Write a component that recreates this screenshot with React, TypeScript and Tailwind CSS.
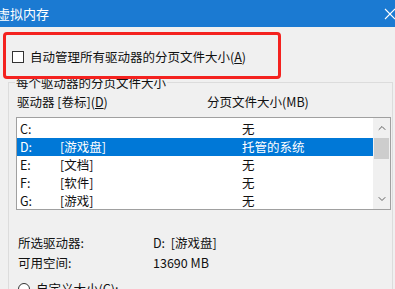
import { ChevronUp, ChevronDown } from 'lucide-react';

const drives = [
  { letter: 'C:', label: '', size: '无' },
  { letter: 'D:', label: '[游戏盘]', size: '托管的系统', selected: true },
  { letter: 'E:', label: '[文档]', size: '无' },
  { letter: 'F:', label: '[软件]', size: '无' },
  { letter: 'G:', label: '[游戏]', size: '无' },
];

export default function App() {
  return (
    <div className="relative w-[395px] h-[289px] overflow-hidden bg-[#f0f0f0] text-[12.5px] text-[#111] font-['Noto_Sans_CJK_SC',sans-serif]">
      {/* title bar */}
      <div className="h-[27px] bg-[#1b7ad2] flex items-center justify-between">
        <span className="ml-[-3px] text-white text-[13px] leading-[27px]">虚拟内存</span>
        <svg width="12" height="12" viewBox="0 0 12 12" className="mr-[-1px]">
          <path d="M1 1 L11 11 M11 1 L1 11" stroke="white" strokeWidth="1.1" />
        </svg>
      </div>

      {/* auto manage */}
      <div className="mt-[22px] ml-[12px] flex items-center h-[16px] gap-[6px]">
        <span className="w-[12px] h-[12px] border border-[#333] bg-white" />
        <span className="leading-[16px]">自动管理所有驱动器的分页文件大小(<span className="underline">A</span>)</span>
      </div>

      {/* group box */}
      <div className="mt-[17px] ml-[8px] w-[385px] h-[300px] border border-[#dcdcdc]">
        <div className="-mt-[8px] ml-[6px] w-fit px-[1px] bg-[#f0f0f0] leading-[16px]">每个驱动器的分页文件大小</div>

        <div className="mt-[3px] flex leading-[16px]">
          <span className="ml-[8px] w-[190px]">驱动器 [卷标](<span className="underline">D</span>)</span>
          <span>分页文件大小(MB)</span>
        </div>

        <div className="mt-[7px] ml-[7px] w-[375px] h-[93px] border border-[#a0a0a0] bg-white flex">
          <div className="flex-1 pt-[2px]">
            {drives.map((d) => (
              <div
                key={d.letter}
                className={`flex h-[18px] items-center ${d.selected ? 'bg-[#0078d7] text-white' : ''}`}
              >
                <span className="ml-[3px] w-[40px]">{d.letter}</span>
                <span className="w-[182px]">{d.label}</span>
                <span>{d.size}</span>
              </div>
            ))}
          </div>
          <div className="w-[17px] bg-[#f0f0f0] flex flex-col items-center">
            <ChevronUp className="mt-[4px] w-[12px] h-[12px] text-[#606060]" strokeWidth={2} />
            <div className="mt-[4px] w-[15px] h-[21px] bg-[#cdcdcd]" />
            <div className="flex-1" />
            <ChevronDown className="mb-[4px] w-[12px] h-[12px] text-[#606060]" strokeWidth={2} />
          </div>
        </div>

        <div className="mt-[23px] ml-[9px] flex leading-[20px]">
          <span className="w-[135px]">所选驱动器:</span>
          <span>D:&nbsp;&nbsp;[游戏盘]</span>
        </div>
        <div className="ml-[9px] flex leading-[20px]">
          <span className="w-[135px]">可用空间:</span>
          <span>13690 MB</span>
        </div>

        <div className="mt-[6px] ml-[9px] flex items-center gap-[6px] leading-[20px]">
          <span className="w-[12px] h-[12px] rounded-full border border-[#333] bg-white" />
          <span>自定义大小(<span className="underline">C</span>):</span>
        </div>
      </div>

      {/* highlight box */}
      <div className="absolute left-[3px] top-[32px] w-[278px] h-[47px] border-[3px] border-[#f4221f] rounded-[4px]" />
    </div>
  );
}
